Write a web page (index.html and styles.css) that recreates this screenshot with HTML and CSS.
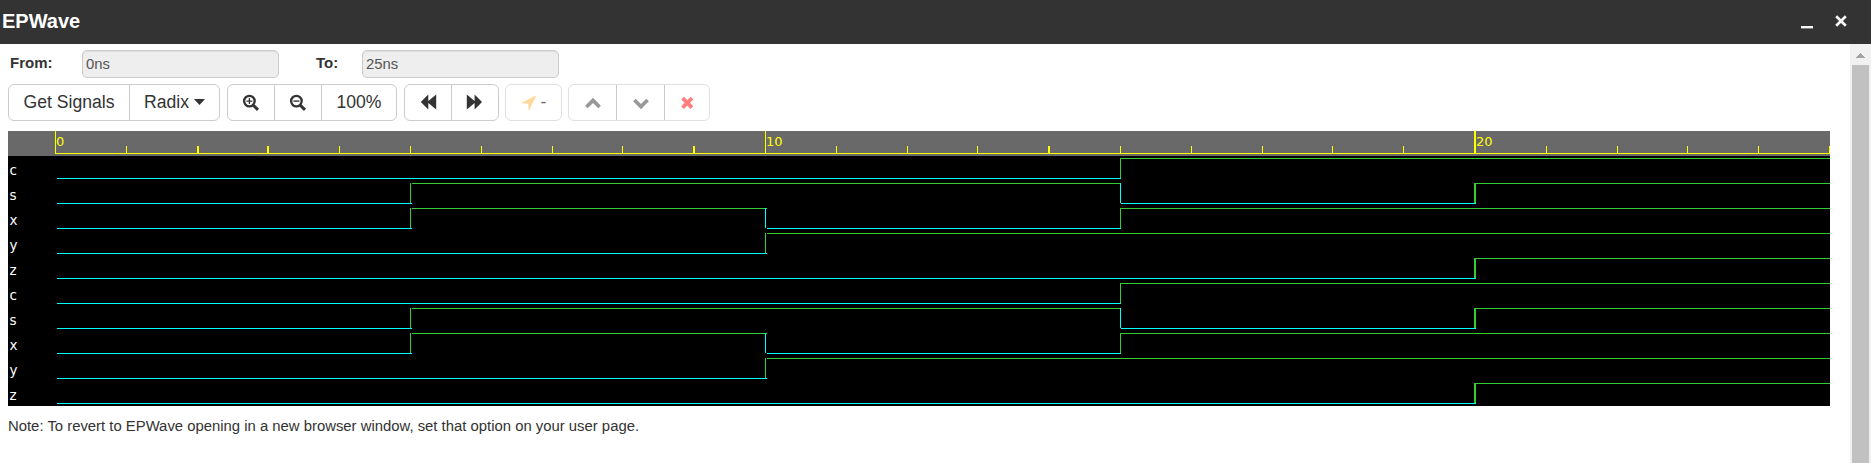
FILE: index.html
```
<!DOCTYPE html>
<html lang="en">
<head>
<meta charset="utf-8">
<title>EPWave</title>
<link rel="stylesheet" href="styles.css">
</head>
<body>
<header class="titlebar">
  <h1 class="title">EPWave</h1>
  <svg class="window-icons" width="60" height="44" viewBox="0 0 60 44" fill="none" stroke="#f5f5f5">
    <path d="M11 27.2h12" stroke-width="2.4"/>
    <path d="M46.2 16.2l9.6 9.6M55.8 16.2l-9.6 9.6" stroke-width="2.7"/>
  </svg>
</header>
<div class="body">
  <main class="content">
    <div class="range">
      <label class="from" for="from">From:</label><input id="from" value="0ns" readonly>
      <label class="to" for="to">To:</label><input id="to" value="25ns" readonly>
    </div>
    <div class="toolbar">
      <div class="group">
        <button class="btn get">Get Signals</button>
        <button class="btn radix">Radix <svg width="11" height="7" viewBox="0 0 11 7" fill="#333"><path d="M0 0h11L5.5 6z"/></svg></button>
      </div>
      <div class="group">
        <button class="btn zoom"><svg width="18" height="18" viewBox="0 0 18 18" fill="none" stroke="#333"><circle cx="7.4" cy="7.1" r="5.3" stroke-width="2.3"/><path d="M11.3 11.2l4.7 4.7" stroke-width="3"/><path d="M4.4 7.1h6M7.4 4.1v6" stroke-width="1.3"/></svg></button>
        <button class="btn zoom"><svg width="18" height="18" viewBox="0 0 18 18" fill="none" stroke="#333"><circle cx="7.4" cy="7.1" r="5.3" stroke-width="2.3"/><path d="M11.3 11.2l4.7 4.7" stroke-width="3"/><path d="M4.4 7.1h6" stroke-width="1.4"/></svg></button>
        <button class="btn percent">100%</button>
      </div>
      <div class="group">
        <button class="btn zoom"><svg width="18" height="18" viewBox="0 0 18 18" fill="#333"><path d="M1.8 8L9.3.6v6.5L17.2.6v15L9.3 8.9v6.7z"/></svg></button>
        <button class="btn zoom last"><svg width="18" height="18" viewBox="0 0 18 18" fill="#333"><path d="M16 8L8.6.6v6.5L.8.6v15l7.8-6.7v6.7z"/></svg></button>
      </div>
      <div class="group faded">
        <button class="btn cursor"><svg width="16" height="16" viewBox="0 0 16 16" fill="#ffb43c"><path d="M15.5.3L8.3 15H7.4V8.6H.7V7.8z"/></svg><span>-</span></button>
      </div>
      <div class="group faded">
        <button class="btn arrow"><svg width="18" height="18" viewBox="0 0 18 18" fill="none" stroke="#333" stroke-width="3.6"><path d="M2.4 13l6.6-6.6 6.6 6.6"/></svg></button>
        <button class="btn arrow"><svg width="18" height="18" viewBox="0 0 18 18" fill="none" stroke="#333" stroke-width="3.6"><path d="M2.4 6l6.6 6.6L15.6 6"/></svg></button>
        <button class="btn remove"><svg width="14" height="18" viewBox="0 0 14 18" fill="none" stroke="#f00" stroke-width="3.8"><path d="M2.6 4.2l9.4 9.4M12 4.2l-9.4 9.4"/></svg></button>
      </div>
    </div>
    <svg id="wave" class="wave" width="1822" height="275" viewBox="8 131 1822 275" shape-rendering="crispEdges"></svg>
    <p class="note">Note: To revert to EPWave opening in a new browser window, set that option on your user page.</p>
  </main>
  <aside class="scrollbar">
    <svg width="21" height="21" viewBox="0 0 21 21" fill="#a3a3a3" shape-rendering="crispEdges"><path d="M6 14h9v-1h-1v-1h-1v-1h-1v-1h-1V9h-1v1H9v1H8v1H7v1H6z"/></svg>
    <div class="thumb"></div>
  </aside>
</div>
<script src="wave.js"></script>
</body>
</html>
```
FILE: styles.css
```
* { box-sizing: border-box; }
body { margin: 0; height: 463px; overflow: hidden; display: flex; flex-direction: column; background: #fff; color: #333; font: 15px "Liberation Sans", Arial, sans-serif; }
.titlebar { height: 44px; flex: none; background: #333; display: flex; justify-content: space-between; padding: 0 21px 0 2px; }
.title { margin: 0; font-size: 20px; line-height: 42px; color: #fff; }
.body { flex: 1; display: flex; justify-content: space-between; }
.content { padding: 6px 0 0 8px; width: 1830px; }
.range { display: flex; height: 28px; }
.range label { font-weight: bold; line-height: 25px; padding-left: 2px; }
.range .from { width: 74px; }
.range .to { width: 48px; margin-left: 35px; padding-left: 2px; }
.range input { width: 197px; height: 28px; padding: 0 3px; border: 1px solid #ccc; border-radius: 5px; background: #eee; box-shadow: inset 0 1px 1px rgba(0,0,0,.075); font: 14.87px "Liberation Sans", Arial, sans-serif; color: #555; outline: 0; }
.toolbar { display: flex; gap: 7px; margin-top: 6px; height: 37px; }
.group { display: flex; height: 37px; border: 1px solid #ccc; border-radius: 6px; }
.group.faded { border-color: #e0e0e0; margin-left: -1px; }
.btn { display: flex; align-items: center; justify-content: center; padding: 0; border: 0; border-right: 1px solid #ccc; background: none; color: #333; font: 17.6px/35px "Liberation Sans", Arial, sans-serif; white-space: pre; }
.btn:last-child { border-right: 0; }
.get { width: 121px; }
.radix { width: 89px; }
.zoom { width: 47px; }
.percent { width: 74px; }
.last { width: 46px; }
.faded svg { opacity: .5; }
.faded span { opacity: .7; }
.cursor { width: 55px; gap: 4px; }
.arrow { width: 48px; }
.remove { width: 44px; }
.wave { display: block; margin-top: 10px; background: #000; }
.wave text { font: 13px "DejaVu Sans", sans-serif; }
.wave .scale-text { fill: #ff0; }
.wave .signal-text { fill: #fff; font-size: 13.5px; }
.note { margin: 10px 0 0; line-height: 21px; font-size: 14.87px; }
.scrollbar { width: 21px; background: #f1f1f1; display: flex; flex-direction: column; }
.scrollbar svg { flex: none; }
.thumb { flex: 1; margin: 0 2px; background: #c1c1c1; }
```
FILE: wave.js
```
const wave = document.getElementById('wave');

function add(tag, attrs, text) {
  const el = document.createElementNS('http://www.w3.org/2000/svg', tag);
  for (const k in attrs) el.setAttribute(k, attrs[k]);
  if (text) el.textContent = text;
  wave.appendChild(el);
}
function rect(x, y, width, height, fill) {
  add('rect', { x, y, width, height, fill });
}

// Time scale
rect(8, 131, 1822, 25, '#696969');
rect(55, 153, 1775, 1, '#ff0');
const ticks = [55, 126, 197, 267, 339, 410, 481, 552, 622, 693, 765, 836, 907, 977, 1048, 1120, 1191, 1262, 1332, 1403, 1474, 1546, 1617, 1687, 1758, 1829];
const wide = [197, 267, 693, 1048, 1474];
ticks.forEach((x, i) => {
  const major = i % 10 === 0;
  rect(x, major ? 131 : 146, wide.includes(x) ? 2 : 1, major ? 22 : 7, '#ff0');
  if (major) add('text', { x: x + (wide.includes(x) ? 2 : 1), y: 146, class: 'scale-text' }, String(i));
});

// Signal levels: initial 0, then toggles at each listed time
const signals = [['c', [15]], ['s', [5, 15, 20]], ['x', [5, 10, 15]], ['y', [10]], ['z', [20]]];
signals.concat(signals).forEach(([name, toggles], row) => {
  const top = 158 + row * 25;
  const low = top + 20;
  let high = false;
  let start = 57;
  add('text', { x: 9.6, y: low - 3, class: 'signal-text' }, name);
  toggles.forEach((t) => {
    const x = ticks[t];
    const end = x + (t === 15 ? 1 : 2);
    rect(start, high ? top : low, end - start, 1, high ? '#32cd32' : '#0ff');
    rect(x, top, t === 20 ? 2 : 1, 20, high ? '#0ff' : '#32cd32');
    high = !high;
    start = end;
  });
  rect(start, high ? top : low, 1830 - start, 1, high ? '#32cd32' : '#0ff');
});
```
